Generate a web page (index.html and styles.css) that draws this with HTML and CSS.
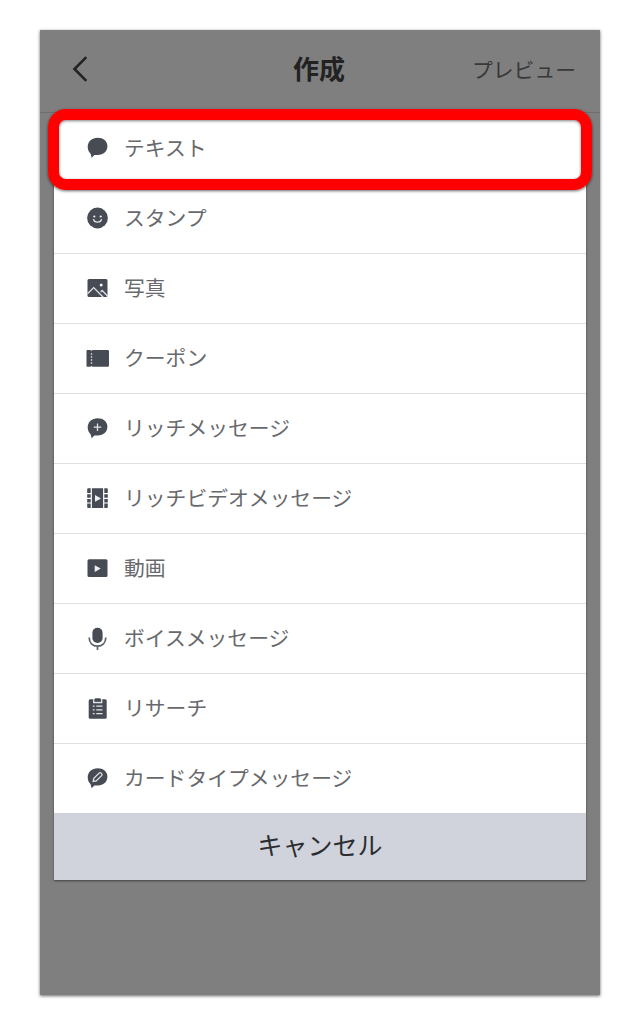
FILE: index.html
```html
<!DOCTYPE html>
<html lang="ja">
<head>
    <meta charset="UTF-8">
    <meta name="viewport" content="width=device-width, initial-scale=1.0">
    <title>作成</title>
    <link rel="stylesheet" href="styles.css">
</head>
<body>
    <div class="screen">
        <header class="header">
            <button class="back" aria-label="戻る">
                <svg width="16" height="26" viewBox="0 0 16 26"><path d="M14.300 1.200L2.500 13l11.800 11.800" fill="none" stroke="#222" stroke-width="2.600"/></svg>
            </button>
            <h1 class="title">作成</h1>
            <button class="preview">プレビュー</button>
        </header>
        <div class="sheet">
            <ul class="menu">
                <li class="item selected">
                    <svg class="icon" viewBox="0 0 24 24"><path d="M11.600 1.700c5.600 0 9.800 3.500 9.800 8.300 0 5.400-4 9-9.600 9H8.400L5.600 21.700l-1-4C2.800 16 1.700 13.800 1.700 10.800c0-5.400 4.400-9.100 9.900-9.100z"/></svg>
                    <span>テキスト</span>
                </li>
                <li class="item">
                    <svg class="icon" viewBox="0 0 24 24"><circle cx="11.500" cy="12" r="10.400"/><circle class="white" cx="8.300" cy="10.500" r="1.100"/><circle class="white" cx="14.700" cy="10.500" r="1.100"/><path class="line" d="M7.500 13.200c.5 4 7.500 4 8 0"/></svg>
                    <span>スタンプ</span>
                </li>
                <li class="item">
                    <svg class="icon" viewBox="0 0 24 24"><rect x="1.500" y="3" width="20" height="18" rx="1.500"/><path class="line" d="M1.500 17.800l6.200-6.200 9.500 9.700"/><path class="line" d="M14.700 16l1.500-1.500 5.300 5.500"/><circle class="white" cx="15.200" cy="9" r="1.500"/></svg>
                    <span>写真</span>
                </li>
                <li class="item">
                    <svg class="icon" viewBox="0 0 24 24"><path d="M1.300 4h3.200q1 1.600 2 0h15.200q1.300 0 1.300 1.300v14.100q0 1.300-1.300 1.300H6.500q-1-1.600-2 0H1.300q-.8 0-.8-1V5q0-1 .8-1z"/><path class="line dots" d="M5.500 7.200v11"/></svg>
                    <span>クーポン</span>
                </li>
                <li class="item">
                    <svg class="icon" viewBox="0 0 24 24"><path d="M11.600 2.200c5.600 0 9.800 3.500 9.800 8.300 0 5.400-4 9-9.600 9H8.400L5.600 22.200l-1-4C2.800 16.500 1.700 14.300 1.700 11.300c0-5.400 4.400-9.100 9.900-9.100z"/><path class="line" d="M11.500 7.400v7.600M7.700 11.200h7.600"/></svg>
                    <span>リッチメッセージ</span>
                </li>
                <li class="item">
                    <svg class="icon" viewBox="0 0 24 24"><path d="M5.900 2.300h11.200V22H5.900zM1.200 3.300q0-1 1-1h2.500V7H1.200zM1.200 8.200h3.500v3.500H1.200zM1.200 12.900h3.500v3.500H1.200zM1.200 17.600h3.500V22H2.200q-1 0-1-1zM18.300 2.300h2.500q1 0 1 1V7h-3.500zM18.300 8.200h3.500v3.500h-3.500zM18.300 12.900h3.500v3.500h-3.500zM18.300 17.600h3.500V21q0 1-1 1h-2.500z"/><path class="white" d="M9 9l6 3.400-6 3.400z"/></svg>
                    <span>リッチビデオメッセージ</span>
                </li>
                <li class="item">
                    <svg class="icon" viewBox="0 0 24 24"><rect x="1.500" y="3.300" width="20" height="17.700" rx="1.500"/><path class="white" d="M8.700 9.300l6 3.300-6 3.300z"/></svg>
                    <span>動画</span>
                </li>
                <li class="item">
                    <svg class="icon" viewBox="0 0 24 24"><rect x="6.400" y="1.700" width="10.200" height="15.300" rx="5"/><path class="stroke" d="M3.200 11.500c0 5.500 3.500 8.700 8.300 8.700s8.300-3.200 8.300-8.700M11.500 20v4"/></svg>
                    <span>ボイスメッセージ</span>
                </li>
                <li class="item">
                    <svg class="icon" viewBox="0 0 24 24"><rect x="2.700" y="3.300" width="18" height="19.400" rx="1.500"/><path class="line" d="M7.700 3v3.500h8V3M6.800 10.100h1.800M10.300 10.100h6.200M6.800 13.900h1.800M10.300 13.900h6.200M6.800 17.700h1.800M10.300 17.700h6.200"/><rect x="8.700" y="2.200" width="6" height="3.200" rx="1"/></svg>
                    <span>リサーチ</span>
                </li>
                <li class="item">
                    <svg class="icon" viewBox="0 0 24 24"><path d="M11.600 2.200c5.600 0 9.800 3.500 9.800 8.300 0 5.400-4 9-9.600 9H8.400L5.600 22.200l-1-4C2.800 16.500 1.700 14.300 1.700 11.300c0-5.400 4.400-9.100 9.900-9.100z"/><path class="line" d="M7.200 15.400l.6-3 5.300-5.300q1-1 2 0l.5.5q1 1 0 2l-5.400 5.300z"/></svg>
                    <span>カードタイプメッセージ</span>
                </li>
            </ul>
            <button class="cancel">キャンセル</button>
        </div>
    </div>
</body>
</html>
```

FILE: styles.css
```css
body {
    margin: 0;
    padding: 30px 40px 29px;
    background-color: #fff;
    font-family: "Noto Sans CJK JP", sans-serif;
}
button {
    padding: 0;
    border: none;
    background: none;
    font-family: inherit;
    cursor: pointer;
}
.screen {
    box-sizing: border-box;
    height: 965px;
    background-color: #7f7f7f;
    box-shadow: 0 1px 3px rgba(0, 0, 0, 0.6);
}
.header {
    box-sizing: border-box;
    height: 83px;
    padding: 0 24px 4px 32px;
    display: grid;
    grid-template-columns: 1fr auto 1fr;
    align-items: center;
    border-bottom: 1px solid #6e6e6e;
}
.back {
    justify-self: start;
    height: 26px;
}
.back svg {
    display: block;
}
.title {
    margin: 0 10px 2px 0;
    font-size: 26px;
    line-height: 38px;
    font-weight: bold;
    color: #222;
}
.preview {
    justify-self: end;
    font-size: 20.8px;
    color: #383838;
}
.sheet {
    margin: 0 14px;
    background-color: #fff;
    box-shadow: 0 1px 2px rgba(0, 0, 0, 0.5);
}
.menu {
    margin: 0;
    padding: 0;
    list-style: none;
}
.item {
    position: relative;
    box-sizing: border-box;
    height: 70px;
    padding-left: 32px;
    display: flex;
    align-items: center;
    gap: 14px;
    font-size: 20.8px;
    line-height: 30px;
    color: #68696c;
}
.item + .item {
    padding-bottom: 1px;
    border-top: 1px solid #dfdfe1;
}
.item span {
    padding-bottom: 2px;
}
/* red frame around the chosen item */
.selected::after {
    content: "";
    position: absolute;
    box-sizing: border-box;
    top: -4px;
    left: -6px;
    right: -6px;
    height: 81px;
    border: 11px solid #fe0000;
    border-radius: 18px;
    box-shadow: 0 1px 3px rgba(0, 0, 0, 0.6), inset 0 1px 3px rgba(0, 0, 0, 0.5);
    z-index: 1;
}
.icon {
    width: 24px;
    height: 24px;
    fill: #474c54;
}
.icon .white {
    fill: #f0f0f0;
}
.icon .line {
    fill: none;
    stroke: #e4e4e6;
    stroke-width: 1.3;
}
.icon .dots {
    stroke-dasharray: 1.5 1.5;
}
.icon .stroke {
    fill: none;
    stroke: #5c6067;
    stroke-width: 1.7;
}
.cancel {
    display: block;
    width: 100%;
    height: 67px;
    padding-bottom: 5px;
    background-color: #d0d3db;
    font-size: 25px;
    color: #2b2d30;
}
```
